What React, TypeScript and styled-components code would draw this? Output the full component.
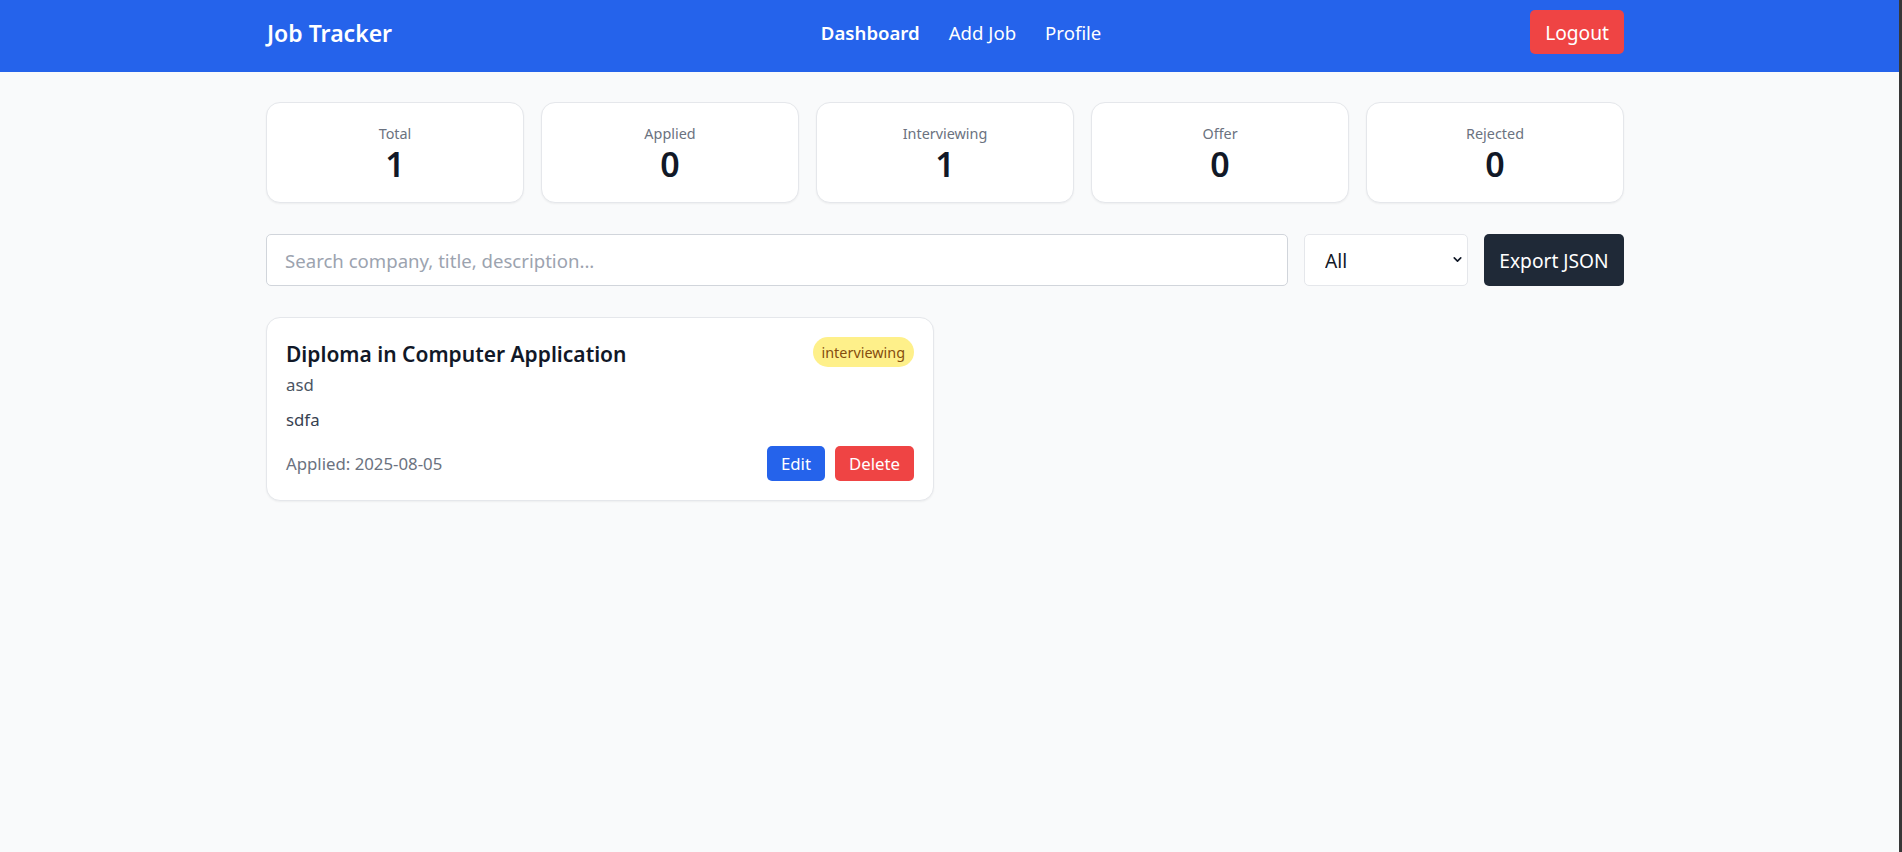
import React from 'react';
import styled, { createGlobalStyle } from "styled-components";
import { ChevronDown } from "lucide-react";

const GlobalStyle = createGlobalStyle`
    * { box-sizing: border-box; }
    html, body { margin: 0; padding: 0; }
    body {
        font-family: "Segoe UI", "Noto Sans", sans-serif;
        background: #f9fafb;
        color: #111827;
    }
`

type StatProps = { label: string; value: number }

const stats: StatProps[] = [
    { label: "Total", value: 1 },
    { label: "Applied", value: 0 },
    { label: "Interviewing", value: 1 },
    { label: "Offer", value: 0 },
    { label: "Rejected", value: 0 },
]

const Stat = (props: StatProps) => (
    <StatCard>
        <StatLabel>{props.label}</StatLabel>
        <StatValue>{props.value}</StatValue>
    </StatCard>
)

type JobPropsType = {
    title: string
    company: string
    description: string
    status: string
    applied: string
}

const JobCard = (props: JobPropsType) => (
    <StyledJob>
        <JobHeader>
            <JobTitle>{props.title}</JobTitle>
            <Badge>{props.status}</Badge>
        </JobHeader>
        <Company>{props.company}</Company>
        <Description>{props.description}</Description>
        <JobFooter>
            <AppliedDate>Applied: {props.applied}</AppliedDate>
            <Actions>
                <SmallButton $color="#2563eb">Edit</SmallButton>
                <SmallButton $color="#ef4444">Delete</SmallButton>
            </Actions>
        </JobFooter>
    </StyledJob>
)

export default function App() {
    return (
        <Screen>
            <GlobalStyle/>
            <Page>
                <Navbar>
                    <NavInner>
                        <Brand>Job Tracker</Brand>
                        <NavLinks>
                            <NavLink $active>Dashboard</NavLink>
                            <NavLink>Add Job</NavLink>
                            <NavLink>Profile</NavLink>
                        </NavLinks>
                        <LogoutButton>Logout</LogoutButton>
                    </NavInner>
                </Navbar>
                <Main>
                    <StatsGrid>
                        {stats.map(s => <Stat key={s.label} {...s}/>)}
                    </StatsGrid>
                    <Toolbar>
                        <SearchInput placeholder="Search company, title, description..."/>
                        <SelectWrap>
                            <StatusSelect defaultValue="all">
                                <option value="all">All</option>
                                <option value="applied">Applied</option>
                                <option value="interviewing">Interviewing</option>
                                <option value="offer">Offer</option>
                                <option value="rejected">Rejected</option>
                            </StatusSelect>
                            <SelectIcon><ChevronDown size={13} strokeWidth={3}/></SelectIcon>
                        </SelectWrap>
                        <ExportButton>Export JSON</ExportButton>
                    </Toolbar>
                    <JobsGrid>
                        <JobCard
                            title="Diploma in Computer Application"
                            company="asd"
                            description="sdfa"
                            status="interviewing"
                            applied="2025-08-05"
                        />
                    </JobsGrid>
                </Main>
            </Page>
            <Edge/>
        </Screen>
    );
}

const Screen = styled.div`
    display: flex;
    min-height: 100vh;
`

const Page = styled.div`
    flex: 1;
    background: #f9fafb;
    padding-right: 9px;
`

const Edge = styled.div`
    width: 3px;
    background: #373737;
`

const Navbar = styled.nav`
    background: #2563eb;
    height: 72px;
    margin-right: -9px;
    padding-right: 9px;
`

const NavInner = styled.div`
    max-width: 1358px;
    margin: 0 auto;
    height: 72px;
    padding-bottom: 6px;
    display: flex;
    align-items: center;
    justify-content: space-between;
`

const Brand = styled.div`
    color: #ffffff;
    font-size: 23px;
    font-weight: 600;
    line-height: 32px;
    padding-left: 1px;
`

const NavLinks = styled.div`
    display: flex;
    gap: 29px;
`

const NavLink = styled.a<{ $active?: boolean }>`
    color: #ffffff;
    font-size: 18.6px;
    line-height: 28px;
    font-weight: ${p => p.$active ? 600 : 400};
    cursor: pointer;
`

const LogoutButton = styled.button`
    background: #ef4444;
    color: #ffffff;
    border: none;
    border-radius: 5px;
    height: 44px;
    padding: 0 15px;
    margin-top: -2px;
    font-family: inherit;
    font-size: 19.2px;
`

const Main = styled.main`
    max-width: 1358px;
    margin: 0 auto;
    padding-top: 30px;
`

const StatsGrid = styled.div`
    display: grid;
    grid-template-columns: repeat(5, 1fr);
    gap: 17px;
`

const StatCard = styled.div`
    background: #ffffff;
    border: 1px solid #e5e7eb;
    border-radius: 14px;
    box-shadow: 0 1px 2px rgba(0, 0, 0, 0.05);
    height: 101px;
    padding: 21px 16px 0;
    text-align: center;
`

const StatLabel = styled.div`
    color: #6b7280;
    font-size: 14.4px;
    line-height: 19.2px;
`

const StatValue = styled.div`
    color: #111827;
    font-size: 34px;
    line-height: 43px;
    font-weight: 600;
`

const Toolbar = styled.div`
    display: flex;
    gap: 16px;
    margin-top: 31px;
    height: 52px;
`

const SearchInput = styled.input`
    flex: 1;
    height: 52px;
    border: 1px solid #d1d5db;
    border-radius: 5px;
    background: #ffffff;
    padding: 0 18px;
    font-family: inherit;
    font-size: 18.6px;
    color: #111827;
    outline: none;

    &::placeholder {
        color: #9ca3af;
    }
`

const SelectWrap = styled.div`
    position: relative;
    width: 164px;
`

const StatusSelect = styled.select`
    appearance: none;
    width: 100%;
    height: 52px;
    border: 1px solid #e5e7eb;
    border-radius: 5px;
    background: #ffffff;
    padding: 0 20px;
    font-family: inherit;
    font-size: 19.2px;
    color: #111827;
    outline: none;
`

const SelectIcon = styled.span`
    position: absolute;
    right: 4px;
    top: 19px;
    color: #111827;
    pointer-events: none;
    display: flex;
`

const ExportButton = styled.button`
    width: 140px;
    height: 52px;
    background: #1f2937;
    color: #ffffff;
    border: none;
    border-radius: 5px;
    font-family: inherit;
    font-size: 19.2px;
`

const JobsGrid = styled.div`
    display: grid;
    grid-template-columns: repeat(2, 1fr);
    gap: 22px;
    margin-top: 31px;
`

const StyledJob = styled.div`
    background: #ffffff;
    border: 1px solid #e5e7eb;
    border-radius: 14px;
    box-shadow: 0 1px 2px rgba(0, 0, 0, 0.05);
    padding: 19px;
`

const JobHeader = styled.div`
    display: flex;
    justify-content: space-between;
    align-items: flex-start;
    min-height: 30px;
`

const JobTitle = styled.h3`
    margin: 0;
    padding-top: 3px;
    font-size: 21px;
    line-height: 29px;
    font-weight: 600;
    color: #111827;
`

const Badge = styled.span`
    background: #fef08a;
    color: #854d0e;
    border-radius: 999px;
    height: 30px;
    padding: 0 9px;
    font-size: 14.4px;
    display: flex;
    align-items: center;
`

const Company = styled.div`
    margin-top: 4px;
    color: #4b5563;
    font-size: 16.8px;
    line-height: 24px;
`

const Description = styled.p`
    margin: 11px 0 0;
    color: #374151;
    font-size: 16.8px;
    line-height: 24px;
`

const JobFooter = styled.div`
    display: flex;
    justify-content: space-between;
    align-items: center;
    margin-top: 14px;
`

const AppliedDate = styled.span`
    color: #6b7280;
    font-size: 16.8px;
`

const Actions = styled.div`
    display: flex;
    gap: 10px;
`

const SmallButton = styled.button<{ $color: string }>`
    background: ${p => p.$color};
    color: #ffffff;
    border: none;
    border-radius: 5px;
    height: 35px;
    padding: 0 14px;
    font-family: inherit;
    font-size: 16.8px;
`
